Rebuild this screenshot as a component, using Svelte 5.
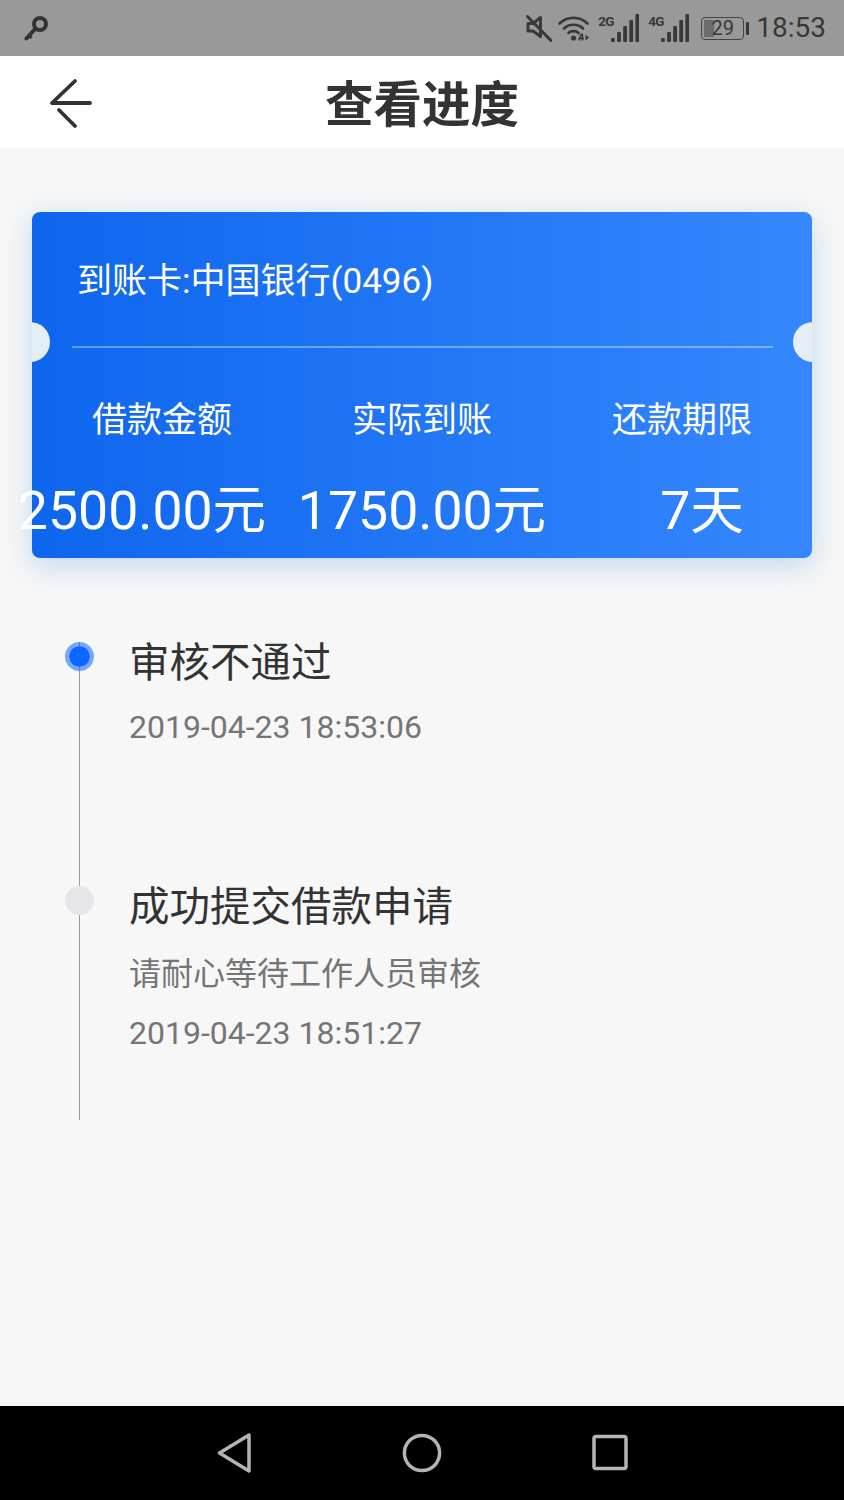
<script>
  const labels = ["借款金额", "实际到账", "还款期限"];
  const values = ["2500.00元", "1750.00元", "7天"];
  const bars = [4, 10, 16, 22, 28];
</script>

{#snippet signal()}
  <svg class="bars" width="28" height="28" viewBox="0 0 28 28" aria-hidden="true">
    {#each bars as h, i}
      <rect x={i * 6.1} y={28 - h} width="3.8" height={h} rx="1" fill="#383838" />
    {/each}
  </svg>
{/snippet}

<div class="screen">
  <div class="status">
    <svg class="key" width="26" height="28" viewBox="0 0 26 28" aria-hidden="true">
      <circle cx="16" cy="10" r="6" fill="none" stroke="#333" stroke-width="4" />
      <path d="M11.5 14.5 L2.5 24.5" stroke="#333" stroke-width="4" stroke-linecap="round" />
      <path d="M5 21.5 L7.5 24" stroke="#333" stroke-width="3" />
    </svg>
    <div class="status-right">
      <svg width="26" height="28" viewBox="0 0 26 28" aria-hidden="true">
        <path d="M2 9.5 H7 L14.5 3.5 V22.5 L7 17 H2 Z" fill="none" stroke="#383838" stroke-width="3" stroke-linejoin="round" />
        <path d="M1.5 2.5 L25 26.5" stroke="#383838" stroke-width="3" stroke-linecap="round" />
      </svg>
      <svg class="wifi" width="32" height="28" viewBox="0 0 32 28" aria-hidden="true">
        <g fill="none" stroke="#383838" stroke-width="2.6" stroke-linecap="round">
          <path d="M1.5 9.5 C9 2 22 2 29.5 9.5" />
          <path d="M6 14.5 C11 9.5 20 9.5 25 14.5" />
          <path d="M10.5 19 C13 16.5 18 16.5 20.5 19" />
        </g>
        <circle cx="15.5" cy="24" r="2.6" fill="#383838" />
        <path d="M21 26.5 L23 20.5 H24.4 V26.5 M20.5 24.5 H26" fill="none" stroke="#383838" stroke-width="1.5" />
        <path d="M27.5 20.5 L31 23.5 L27.5 26.5 Z" fill="#383838" />
      </svg>
      <div class="net">
        <span class="net-tag">2G</span>
        {@render signal()}
      </div>
      <div class="net">
        <span class="net-tag">4G</span>
        {@render signal()}
      </div>
      <div class="battery">
        <div class="cell"><span class="level"></span><span class="pct">29</span></div>
        <span class="nub"></span>
      </div>
      <span class="time">18:53</span>
    </div>
  </div>

  <header class="topbar">
    <svg class="back" width="52" height="56" viewBox="0 0 52 56" aria-hidden="true">
      <path d="M31 7 L8 29 H46 M15 36 L31 52" fill="none" stroke="#333" stroke-width="3.8" stroke-linecap="round" stroke-linejoin="round" />
    </svg>
    <h1>查看进度</h1>
  </header>

  <main class="content">
    <section class="card">
      <span class="notch left"></span>
      <span class="notch right"></span>
      <div class="bank">到账卡:中国银行(0496)</div>
      <div class="divider"></div>
      <div class="labels">
        {#each labels as label}
          <span>{label}</span>
        {/each}
      </div>
      <div class="values">
        {#each values as value}
          <span>{value}</span>
        {/each}
      </div>
    </section>

    <ul class="timeline">
      <li class="step current">
        <span class="dot"></span>
        <div class="title">审核不通过</div>
        <div class="date">2019-04-23 18:53:06</div>
      </li>
      <li class="step">
        <span class="dot"></span>
        <div class="title">成功提交借款申请</div>
        <div class="note">请耐心等待工作人员审核</div>
        <div class="date">2019-04-23 18:51:27</div>
      </li>
    </ul>
  </main>

  <nav class="navbar">
    <svg width="40" height="40" viewBox="0 0 40 40" aria-hidden="true">
      <path d="M5.5 20 L35 2 V38 Z" fill="none" stroke="#b4b4b4" stroke-width="3.5" stroke-linejoin="round" />
    </svg>
    <svg width="40" height="40" viewBox="0 0 40 40" aria-hidden="true">
      <circle cx="20" cy="20" r="17.6" fill="none" stroke="#b4b4b4" stroke-width="3.5" />
    </svg>
    <svg width="40" height="40" viewBox="0 0 40 40" aria-hidden="true">
      <rect x="4" y="3.5" width="32" height="32" rx="2" fill="none" stroke="#b4b4b4" stroke-width="3.5" />
    </svg>
  </nav>
</div>

<style>
  :global(body) {
    margin: 0;
    background: #f7f7f7;
  }

  .screen {
    width: 844px;
    height: 1500px;
    display: flex;
    flex-direction: column;
    overflow: hidden;
    font-family: Roboto, "Noto Sans CJK SC", sans-serif;
    background: #f7f7f7;
  }

  /* Status bar */
  .status {
    height: 56px;
    flex: none;
    box-sizing: border-box;
    padding: 0 18px 0 24px;
    display: flex;
    align-items: center;
    justify-content: space-between;
    background: #999;
    color: #383838;
  }

  .status-right {
    display: flex;
    align-items: center;
  }

  .wifi {
    margin-left: 6px;
  }

  .net {
    display: flex;
    align-items: flex-end;
    height: 28px;
    margin-left: 8px;
  }

  .net + .net {
    margin-left: 9px;
  }

  .net-tag {
    align-self: flex-start;
    width: 13px;
    font-size: 13.5px;
    line-height: 14px;
    font-weight: 700;
    letter-spacing: -0.8px;
    white-space: nowrap;
  }

  .bars {
    display: block;
  }

  .battery {
    display: flex;
    align-items: center;
    margin-left: 12px;
  }

  .cell {
    position: relative;
    box-sizing: border-box;
    width: 43px;
    height: 23px;
    border: 1.5px solid #444;
    border-radius: 4px;
    display: flex;
    align-items: center;
    justify-content: center;
  }

  .level {
    position: absolute;
    left: 2px;
    top: 2px;
    bottom: 2px;
    width: 10px;
    background: #6c6c6c;
  }

  .pct {
    position: relative;
    font-size: 20px;
    line-height: 20px;
  }

  .nub {
    width: 3px;
    height: 13px;
    margin-left: 2px;
    background: #383838;
    border-radius: 1px;
  }

  .time {
    margin-left: 7px;
    font-size: 28px;
    line-height: 32px;
  }

  /* Title bar */
  .topbar {
    position: relative;
    box-sizing: border-box;
    height: 92px;
    padding-top: 7px;
    flex: none;
    display: flex;
    align-items: center;
    justify-content: center;
    background: #fff;
  }

  .back {
    position: absolute;
    left: 44px;
    top: 18px;
  }

  h1 {
    margin: 0;
    font-size: 48.5px;
    line-height: 60px;
    font-weight: 700;
    color: #333;
  }

  .content {
    flex: 1;
    padding: 64px 32px 0;
  }

  /* Loan card */
  .card {
    position: relative;
    box-sizing: border-box;
    height: 346px;
    border-radius: 8px;
    background: linear-gradient(90deg, #0e66ee, #3587fd);
    box-shadow: 0 8px 30px rgba(40, 125, 215, 0.26);
    color: #fff;
  }

  /* circle is centred just outside the card edge, only the inner part shows */
  .notch {
    position: absolute;
    top: 110px;
    width: 18px;
    height: 40px;
    background: #e5edf5;
  }

  .notch.left {
    left: 0;
    clip-path: circle(20px at -2px 20px);
  }

  .notch.right {
    right: 0;
    width: 19px;
    clip-path: circle(20px at 20px 20px);
  }

  .bank {
    padding: 46px 0 0 45px;
    font-size: 35px;
    line-height: 48px;
  }

  .divider {
    height: 2px;
    margin: 40px 39px 0 40px;
    background: rgba(255, 255, 255, 0.35);
  }

  .labels {
    display: grid;
    grid-template-columns: repeat(3, 1fr);
    margin-top: 48px;
    text-align: center;
    font-size: 35px;
    line-height: 50px;
  }

  .values {
    display: grid;
    grid-template-columns: repeat(3, 280px);
    margin: 28px -30px 0;
    text-align: center;
    font-size: 53.6px;
    line-height: 74px;
    white-space: nowrap;
  }

  /* Progress steps */
  .timeline {
    list-style: none;
    margin: 84px 0 0 47px;
    padding: 0;
  }

  .step {
    position: relative;
    box-sizing: border-box;
    height: 244px;
    padding-left: 49px;
    border-left: 1px solid #9c9ca0;
  }

  .step + .step {
    height: 234px;
  }

  .dot {
    position: absolute;
    left: -15px;
    top: 0;
    width: 29px;
    height: 29px;
    border-radius: 50%;
    background: #e6e6ea;
  }

  .current .dot {
    box-sizing: border-box;
    border: 4px solid rgba(13, 102, 255, 0.55);
    background: #0d66ff;
    background-clip: padding-box;
  }

  .title {
    font-size: 40.5px;
    line-height: 42px;
    color: #333;
  }

  .date,
  .note {
    font-size: 32px;
    line-height: 44px;
    color: #757575;
  }

  .note {
    margin-top: 24px;
  }

  .date {
    margin-top: 21px;
  }

  .note + .date {
    margin-top: 15px;
  }

  /* Android nav */
  .navbar {
    height: 94px;
    flex: none;
    display: flex;
    align-items: center;
    justify-content: center;
    gap: 148px;
    background: #000;
  }
</style>
